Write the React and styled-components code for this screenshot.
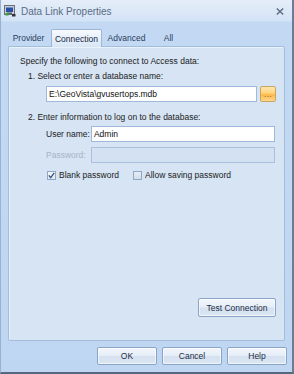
import styled, { createGlobalStyle } from "styled-components";

const GlobalStyle = createGlobalStyle`
  html, body {
    margin: 0;
    padding: 0;
    background: #c4d9f3;
  }
  * {
    box-sizing: border-box;
  }
`;

const Window = styled.div`
  width: 294px;
  height: 374px;
  display: flex;
  flex-direction: column;
  border-left: 1px solid #9ab2d2;
  border-right: 2px solid #6c7c92;
  border-bottom: 2px solid #58677c;
  background: linear-gradient(#e5eef9 0px, #d3e3f6 21px, #c3d9f3 22px, #bfd6f2 100%);
  font-family: "Liberation Sans", Arial, sans-serif;
  font-size: 8.5px;
  color: #1b1b1b;
`;

const TitleBar = styled.div`
  height: 22px;
  flex: none;
  display: flex;
  align-items: center;
  gap: 5px;
  padding: 0 8px 0 3px;
`;

const Title = styled.span`
  font-size: 10px;
  color: #5a6c84;
  margin-top: 1px;
`;

const CloseBox = styled.div`
  margin-left: auto;
  width: 9px;
  height: 9px;
  display: flex;
  align-items: center;
  justify-content: center;
`;

const Body = styled.div`
  flex: 1;
  display: flex;
  flex-direction: column;
  padding: 7px 7px 0 7px;
`;

const TabList = styled.div`
  display: flex;
  gap: 2px;
  height: 17px;
  position: relative;
  z-index: 1;
`;

const Tab = styled.div`
  width: ${(p) => p.$w}px;
  height: ${(p) => (p.$active ? "18px" : "17px")};
  display: flex;
  align-items: center;
  justify-content: center;
  color: ${(p) => (p.$active ? "#15253d" : "#2a3f5e")};
  border: ${(p) => (p.$active ? "1px solid #9cb6d7" : "1px solid transparent")};
  border-bottom: none;
  border-radius: 2px 2px 0 0;
  background: ${(p) =>
    p.$active ? "linear-gradient(#f7fafe 0%, #e4eefa 60%, #d7e5f5 100%)" : "transparent"};
`;

const Panel = styled.div`
  height: 295px;
  display: flex;
  flex-direction: column;
  padding: 9px 8px 23px 11px;
  border: 1px solid #a3bddd;
  border-radius: 0 2px 2px 2px;
  background: #d6e4f4;
  box-shadow: inset 1px 1px 0 #e9f1fa;
`;

const Line = styled.div`
  height: 11px;
  line-height: 11px;
  margin-top: ${(p) => p.$mt || 0}px;
  margin-left: ${(p) => p.$indent || 0}px;
  white-space: nowrap;
`;

const PathRow = styled.div`
  display: flex;
  gap: 3px;
  margin: 4px 0 0 26px;
`;

const TextInput = styled.div`
  flex: 1;
  height: 16px;
  display: flex;
  align-items: center;
  padding: 0 2px;
  border: 1px solid ${(p) => (p.$disabled ? "#a9bfdb" : "#9fb9da")};
  background: ${(p) => (p.$disabled ? "#d3e1f2" : "#ffffff")};
  color: #111;
  white-space: nowrap;
  overflow: hidden;
`;

const BrowseButton = styled.div`
  width: 16px;
  height: 16px;
  display: flex;
  align-items: flex-end;
  justify-content: center;
  padding-bottom: 3px;
  border: 1px solid #c9a463;
  border-radius: 2px;
  background: linear-gradient(#ffe7ae 0%, #ffd27a 45%, #fdb848 55%, #ffd78c 100%);
  color: #6b4a12;
  font-size: 8px;
  line-height: 6px;
  letter-spacing: 0.5px;
`;

const LoginGrid = styled.div`
  display: grid;
  grid-template-columns: auto 1fr;
  align-items: center;
  column-gap: 1px;
  row-gap: 5px;
  margin: 3px 1px 0 26px;
`;

const Label = styled.span`
  color: ${(p) => (p.$disabled ? "#a6b3c5" : "#1b1b1b")};
  white-space: nowrap;
`;

const CheckRow = styled.div`
  display: flex;
  align-items: center;
  margin: 7px 0 0 27px;
  gap: 14px;
`;

const Check = styled.label`
  display: flex;
  align-items: center;
  gap: 3px;
  white-space: nowrap;
`;

const Box = styled.span`
  width: 9px;
  height: 9px;
  display: flex;
  align-items: center;
  justify-content: center;
  border: 1px solid #8fa8c8;
  background: ${(p) =>
    p.$checked
      ? "linear-gradient(#f6f9fc, #dfe8f3)"
      : "linear-gradient(#e9eef5, #d4dce8)"};
`;

const Spacer = styled.div`
  flex: 1;
`;

const Button = styled.div`
  width: ${(p) => p.$w || 60}px;
  height: ${(p) => p.$h || 18}px;
  display: flex;
  align-items: center;
  justify-content: center;
  border: 1px solid #8aa4c6;
  border-radius: 2px;
  background: linear-gradient(#f3f7fc 0%, #e5edf7 48%, #d5e1f0 52%, #dbe6f3 100%);
  box-shadow: inset 0 0 0 1px rgba(255, 255, 255, 0.6);
  color: #1c2c45;
  white-space: nowrap;
`;

const TestButton = styled(Button)`
  align-self: flex-end;
`;

const Footer = styled.div`
  display: flex;
  justify-content: flex-end;
  gap: 5px;
  margin: 6px -2px 0 0;
`;

function AppIcon() {
  return (
    <svg width="12" height="12" viewBox="0 0 12 12">
      <rect x="0.5" y="0.5" width="10" height="9" fill="#c9ccd2" stroke="#6b7078" />
      <rect x="2" y="2" width="7" height="5" fill="#2a4fa8" />
      <rect x="2" y="2" width="7" height="1" fill="#6d8fd8" />
      <rect x="3" y="7.5" width="5" height="1.5" fill="#5a5f66" />
      <rect x="1.5" y="8" width="3" height="2.5" fill="#3aa043" />
      <rect x="8" y="9" width="3.5" height="2.5" fill="#2d3440" />
    </svg>
  );
}

function CloseIcon() {
  return (
    <svg width="8" height="7" viewBox="0 0 8 7">
      <path d="M0.8 0.6 L7.2 6.4 M7.2 0.6 L0.8 6.4" stroke="#5a6a80" strokeWidth="1.4" />
    </svg>
  );
}

function Tick() {
  return (
    <svg width="7" height="7" viewBox="0 0 7 7">
      <path d="M0.8 3.4 L2.7 5.6 L6.2 0.9" fill="none" stroke="#34527e" strokeWidth="1.3" />
    </svg>
  );
}

const tabs = [
  { label: "Provider", w: 41 },
  { label: "Connection", w: 51, active: true },
  { label: "Advanced", w: 45 },
  { label: "All", w: 35 },
];

export default function App() {
  return (
    <>
      <GlobalStyle />
      <Window>
        <TitleBar>
          <AppIcon />
          <Title>Data Link Properties</Title>
          <CloseBox>
            <CloseIcon />
          </CloseBox>
        </TitleBar>
        <Body>
          <TabList>
            {tabs.map((t) => (
              <Tab key={t.label} $w={t.w} $active={t.active}>
                {t.label}
              </Tab>
            ))}
          </TabList>
          <Panel>
            <Line>Specify the following to connect to Access data:</Line>
            <Line $mt={4} $indent={8}>
              1. Select or enter a database name:
            </Line>
            <PathRow>
              <TextInput>E:\GeoVista\gvusertops.mdb</TextInput>
              <BrowseButton>...</BrowseButton>
            </PathRow>
            <Line $mt={10} $indent={8}>
              2. Enter information to log on to the database:
            </Line>
            <LoginGrid>
              <Label>User name:</Label>
              <TextInput>Admin</TextInput>
              <Label $disabled>Password:</Label>
              <TextInput $disabled />
            </LoginGrid>
            <CheckRow>
              <Check>
                <Box $checked>
                  <Tick />
                </Box>
                Blank password
              </Check>
              <Check>
                <Box />
                Allow saving password
              </Check>
            </CheckRow>
            <Spacer />
            <TestButton $w={78} $h={19}>
              Test Connection
            </TestButton>
          </Panel>
          <Footer>
            <Button>OK</Button>
            <Button>Cancel</Button>
            <Button>Help</Button>
          </Footer>
        </Body>
      </Window>
    </>
  );
}
